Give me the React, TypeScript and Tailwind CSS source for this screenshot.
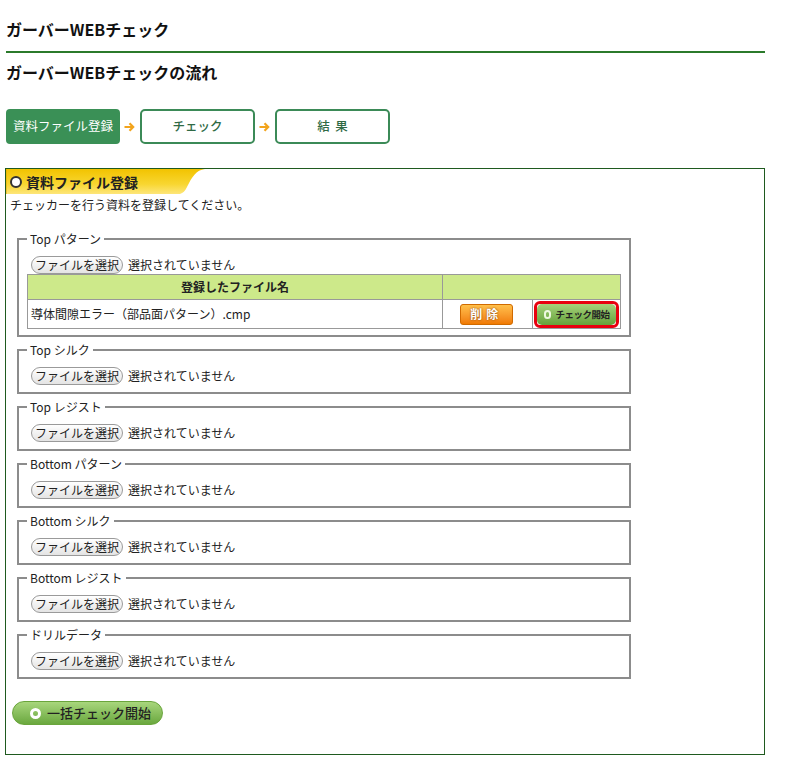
import type { JSX } from 'react'

const fields = ['Top シルク', 'Top レジスト', 'Bottom パターン', 'Bottom シルク', 'Bottom レジスト', 'ドリルデータ']

function Arrow(): JSX.Element {
  return (
    <svg width="11" height="10" viewBox="0 0 11 10" className="ml-[4px] mr-[5px]">
      <path d="M0.5 5 H9 M5.5 1.2 L9.2 5 L5.5 8.8" fill="none" stroke="#f2a41c" strokeWidth="2.2" />
    </svg>
  )
}

function FileRow(): JSX.Element {
  return (
    <div className="ml-[4px] flex h-[18px] items-center text-[12px] leading-[16px]">
      <button className="flex h-[18px] w-[92px] items-center justify-center rounded-[9px] border border-[#9a9a9a] bg-gradient-to-b from-white to-[#e4e4e4] text-[12px] text-[#222]">
        ファイルを選択
      </button>
      <span className="ml-[5px]">選択されていません</span>
    </div>
  )
}

function Field({ label, first, children }: { label: string; first?: boolean; children?: React.ReactNode }): JSX.Element {
  return (
    <fieldset className={first ? 'border-2 border-[#8c8c8c] px-[8px] pb-[6px] pt-[9px]' : 'mt-[5px] border-2 border-[#8c8c8c] px-[8px] pb-[7px] pt-[9px]'}>
      <legend className="px-[3px] text-[12px] leading-[16px] text-[#222]">{label}</legend>
      <FileRow />
      {children}
    </fieldset>
  )
}

function App(): JSX.Element {
  return (
    <div className="min-h-[773px] w-[792px] bg-white text-[#222] font-['Noto_Sans_CJK_JP','Noto_Sans',sans-serif]">
      {/* page heading */}
      <div className="px-[6px]">
        <h1 className="pt-[18px] pb-[11px] text-[16px] font-bold leading-[22px] text-[#111]">ガーバーWEBチェック</h1>
        <div className="h-[2px] w-[759px] bg-[#2b7a2b]" />
        <h2 className="mt-[8px] text-[16px] font-bold leading-[22px] text-[#111]">ガーバーWEBチェックの流れ</h2>

        {/* flow steps */}
        <div className="mt-[26px] flex h-[35px] items-center">
          <div className="flex h-[35px] w-[114px] items-center justify-center rounded-[4px] bg-[#3a9056] text-[12.5px] text-white">
            資料ファイル登録
          </div>
          <Arrow />
          <div className="flex h-[35px] w-[115px] items-center justify-center rounded-[5px] border-2 border-[#3b8a57] text-[12.5px] font-medium text-[#2f6a45]">
            チェック
          </div>
          <Arrow />
          <div className="flex h-[35px] w-[115px] items-center justify-center rounded-[5px] border-2 border-[#3b8a57] text-[12.5px] font-medium text-[#2f6a45]">
            結&nbsp;&nbsp;果
          </div>
        </div>
      </div>

      {/* main panel */}
      <div className="ml-[5px] mt-[24px] h-[587px] w-[760px] border border-[#1f5a1f]">
        <div className="relative h-[25px] w-[200px]">
          <svg width="200" height="25" viewBox="0 0 200 25" className="absolute left-0 top-0">
            <defs>
              <linearGradient id="tab" x1="0" y1="0" x2="0" y2="1">
                <stop offset="0" stopColor="#f2c300" />
                <stop offset="0.6" stopColor="#f8d630" />
                <stop offset="1" stopColor="#fde67a" />
              </linearGradient>
            </defs>
            <path d="M0 0 H199 C190 1 186 8 181 18 C179 22 177 24 174 25 H0 Z" fill="url(#tab)" />
            <path d="M0 0 V25" stroke="#e0a800" strokeWidth="1" />
          </svg>
          <div className="relative flex h-[25px] items-center pl-[4px]">
            <span className="h-[12px] w-[12px] rounded-full border-2 border-[#333] bg-white" />
            <span className="ml-[4px] text-[14px] font-bold leading-[18px] text-[#222]">資料ファイル登録</span>
          </div>
        </div>

        <p className="mt-[3px] pl-[4px] text-[12px] leading-[16px]">チェッカーを行う資料を登録してください。</p>

        <div className="ml-[11px] mt-[18px] w-[614px]">
          <Field label="Top パターン" first>
            <table className="w-[594px] border-collapse border border-[#999] text-[12px]">
              <tbody>
                <tr className="h-[25px] bg-[#cde98a]">
                  <th className="w-[416px] border border-[#999] font-bold">登録したファイル名</th>
                  <th colSpan={2} className="border border-[#999]" />
                </tr>
                <tr className="h-[29px]">
                  <td className="border border-[#999] pl-[3px]">導体間隙エラー（部品面パターン）.cmp</td>
                  <td className="w-[90px] border border-[#999]">
                    <div className="flex justify-center pr-[3px]">
                      <button className="flex h-[21px] w-[53px] items-center justify-center rounded-[3px] border border-[#d06a00] bg-gradient-to-b from-[#ffc04a] to-[#f07a00] text-[12px] font-bold tracking-[4px] text-white [text-shadow:0_0_2px_#7a3a00]">
                        削除
                      </button>
                    </div>
                  </td>
                  <td className="w-[88px] border border-[#999] px-[1px]">
                    <div className="rounded-[6px] border-[3px] border-[#e8000f]">
                      <button className="flex h-[21px] w-full items-center justify-center rounded-[5px] bg-gradient-to-b from-[#a6d27a] to-[#65a23a] text-[9.5px] font-bold tracking-[-0.5px] text-[#222]">
                        <span className="mr-[5px] h-[9px] w-[7px] rounded-full border-2 border-[#eef8e0]" />
                        チェック開始
                      </button>
                    </div>
                  </td>
                </tr>
              </tbody>
            </table>
          </Field>
          {fields.map((f) => (
            <Field key={f} label={f} />
          ))}
        </div>

        <button className="ml-[6px] mt-[22px] flex h-[24px] w-[151px] items-center rounded-full border border-[#6aa53c] bg-gradient-to-b from-[#a8d67c] to-[#6aa83e] pl-[17px] text-[13px] font-medium text-[#222]">
          <span className="h-[11px] w-[11px] rounded-full border-[3px] border-white" />
          <span className="ml-[6px]">一括チェック開始</span>
        </button>
      </div>
    </div>
  )
}

export default App
